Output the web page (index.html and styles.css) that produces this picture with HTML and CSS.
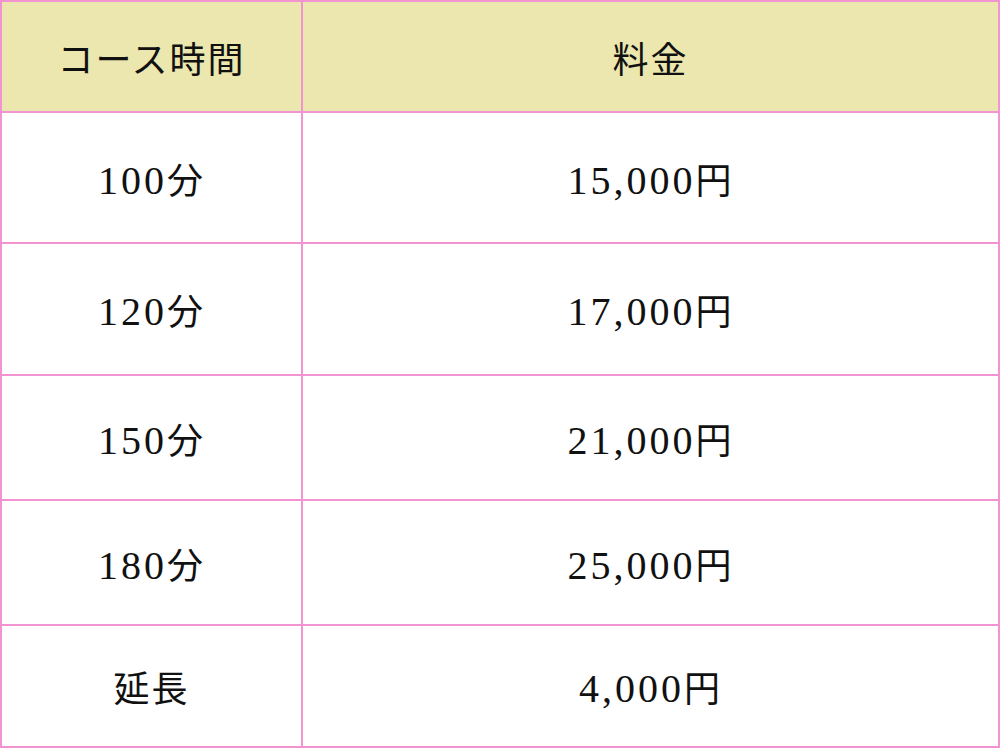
FILE: index.html
```html
<!DOCTYPE html>
<html lang="ja">
<head>
<meta charset="utf-8">
<link rel="stylesheet" href="styles.css">
</head>
<body>
<table class="price">
  <thead>
    <tr class="r-head"><th class="c1">コース時間</th><th class="c2">料金</th></tr>
  </thead>
  <tbody>
    <tr class="r1"><td><span class="num">100</span>分</td><td><span class="num">15,000</span>円</td></tr>
    <tr class="r2"><td><span class="num">120</span>分</td><td><span class="num">17,000</span>円</td></tr>
    <tr class="r3"><td><span class="num">150</span>分</td><td><span class="num">21,000</span>円</td></tr>
    <tr class="r4"><td><span class="num">180</span>分</td><td><span class="num">25,000</span>円</td></tr>
    <tr class="r5"><td>延長</td><td><span class="num">4,000</span>円</td></tr>
  </tbody>
</table>
</body>
</html>
```
FILE: styles.css
```css
html, body {
  margin: 0;
  padding: 0;
  background: #ffffff;
}
.price {
  width: 1000px;
  border-collapse: collapse;
  table-layout: fixed;
  font-family: "Liberation Serif", "Noto Sans CJK JP", serif;
  font-size: 36px;
  letter-spacing: 2px;
  color: #111;
}
.price th,
.price td {
  border: 2px solid #f293d2;
  text-align: center;
  vertical-align: middle;
  padding: 0;
  font-weight: normal;
}
.price th {
  background: #ebe7ae;
}
.num {
  font-size: 40px;
  letter-spacing: 3px;
}
.c1 { width: 299px; }
.r-head { height: 111px; }
.r1 { height: 131px; }
.r2 { height: 132px; }
.r3 { height: 125px; }
.r4 { height: 125px; }
.r5 { height: 122px; }
```
